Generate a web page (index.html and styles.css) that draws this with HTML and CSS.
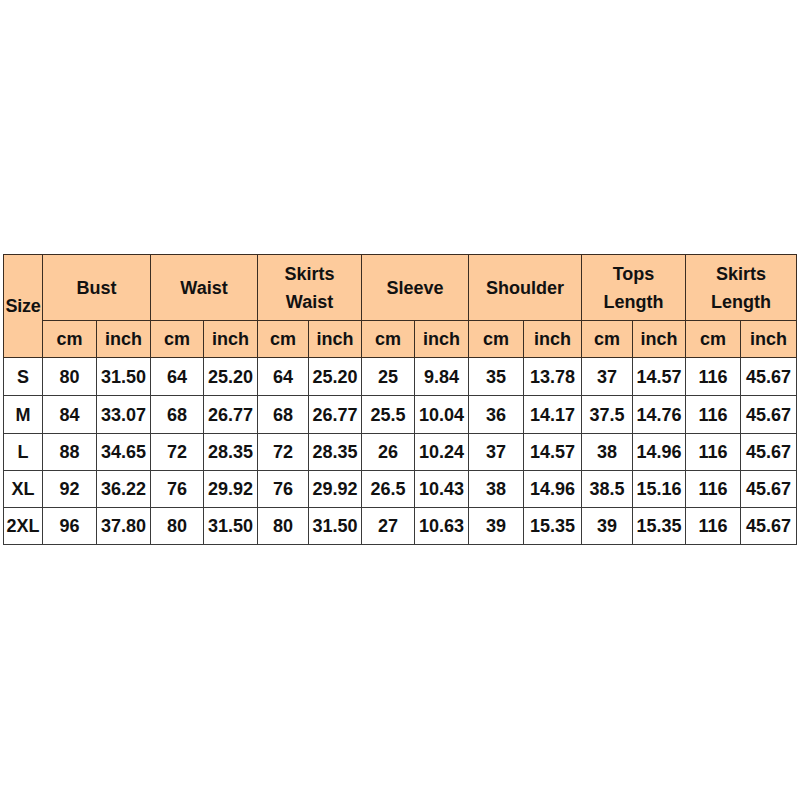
FILE: index.html
```html
<!DOCTYPE html>
<html>
<head>
<meta charset="utf-8">
<link rel="stylesheet" href="styles.css">
</head>
<body>
<div class="page">
<table class="size-table">
<colgroup>
<col class="c-size">
<col class="c54"><col class="c54">
<col class="c53"><col class="c54">
<col class="c51"><col class="c53">
<col class="c53"><col class="c54">
<col class="c55"><col class="c58">
<col class="c51"><col class="c53">
<col class="c55"><col class="c56">
</colgroup>
<thead>
<tr class="h1">
<th rowspan="2" class="size-h">Size</th>
<th colspan="2">Bust</th>
<th colspan="2">Waist</th>
<th colspan="2">Skirts<br>Waist</th>
<th colspan="2">Sleeve</th>
<th colspan="2">Shoulder</th>
<th colspan="2">Tops<br>Length</th>
<th colspan="2">Skirts<br>Length</th>
</tr>
<tr class="h2">
<th>cm</th><th>inch</th>
<th>cm</th><th>inch</th>
<th>cm</th><th>inch</th>
<th>cm</th><th>inch</th>
<th>cm</th><th>inch</th>
<th>cm</th><th>inch</th>
<th>cm</th><th>inch</th>
</tr>
</thead>
<tbody>
<tr class="r38"><td>S</td><td>80</td><td>31.50</td><td>64</td><td>25.20</td><td>64</td><td>25.20</td><td>25</td><td>9.84</td><td>35</td><td>13.78</td><td>37</td><td>14.57</td><td>116</td><td>45.67</td></tr>
<tr class="r38"><td>M</td><td>84</td><td>33.07</td><td>68</td><td>26.77</td><td>68</td><td>26.77</td><td>25.5</td><td>10.04</td><td>36</td><td>14.17</td><td>37.5</td><td>14.76</td><td>116</td><td>45.67</td></tr>
<tr class="r37"><td>L</td><td>88</td><td>34.65</td><td>72</td><td>28.35</td><td>72</td><td>28.35</td><td>26</td><td>10.24</td><td>37</td><td>14.57</td><td>38</td><td>14.96</td><td>116</td><td>45.67</td></tr>
<tr class="r37"><td>XL</td><td>92</td><td>36.22</td><td>76</td><td>29.92</td><td>76</td><td>29.92</td><td>26.5</td><td>10.43</td><td>38</td><td>14.96</td><td>38.5</td><td>15.16</td><td>116</td><td>45.67</td></tr>
<tr class="r37"><td>2XL</td><td>96</td><td>37.80</td><td>80</td><td>31.50</td><td>80</td><td>31.50</td><td>27</td><td>10.63</td><td>39</td><td>15.35</td><td>39</td><td>15.35</td><td>116</td><td>45.67</td></tr>
</tbody>
</table>
</div>
</body>
</html>
```

FILE: styles.css
```css
html, body {
  margin: 0;
  padding: 0;
  background: #ffffff;
}

.page {
  padding: 254px 0 0 3px;
}

.size-table {
  border-collapse: collapse;
  table-layout: fixed;
  width: 793px;
  font-family: "Liberation Sans", Arial, sans-serif;
  font-weight: bold;
  font-size: 18px;
  color: #111111;
}

.c-size { width: 39px; }
.c51 { width: 51px; }
.c53 { width: 53px; }
.c54 { width: 54px; }
.c55 { width: 55px; }
.c56 { width: 56px; }
.c58 { width: 58px; }

.size-table th,
.size-table td {
  border: 1px solid #3a3a3a;
  padding: 0;
  text-align: center;
  vertical-align: middle;
  white-space: nowrap;
  overflow: visible;
}

.size-table th {
  background: #fdcb9c;
  font-weight: bold;
  line-height: 28px;
  border-color: #3b2d22;
}

.h1 { height: 66px; }
.h2 { height: 37px; }
.r38 { height: 38px; }
.r37 { height: 37px; }

.size-h {
  text-align: left;
  padding-left: 1px;
  letter-spacing: -0.3px;
}

.size-table td {
  line-height: 20px;
}
```
